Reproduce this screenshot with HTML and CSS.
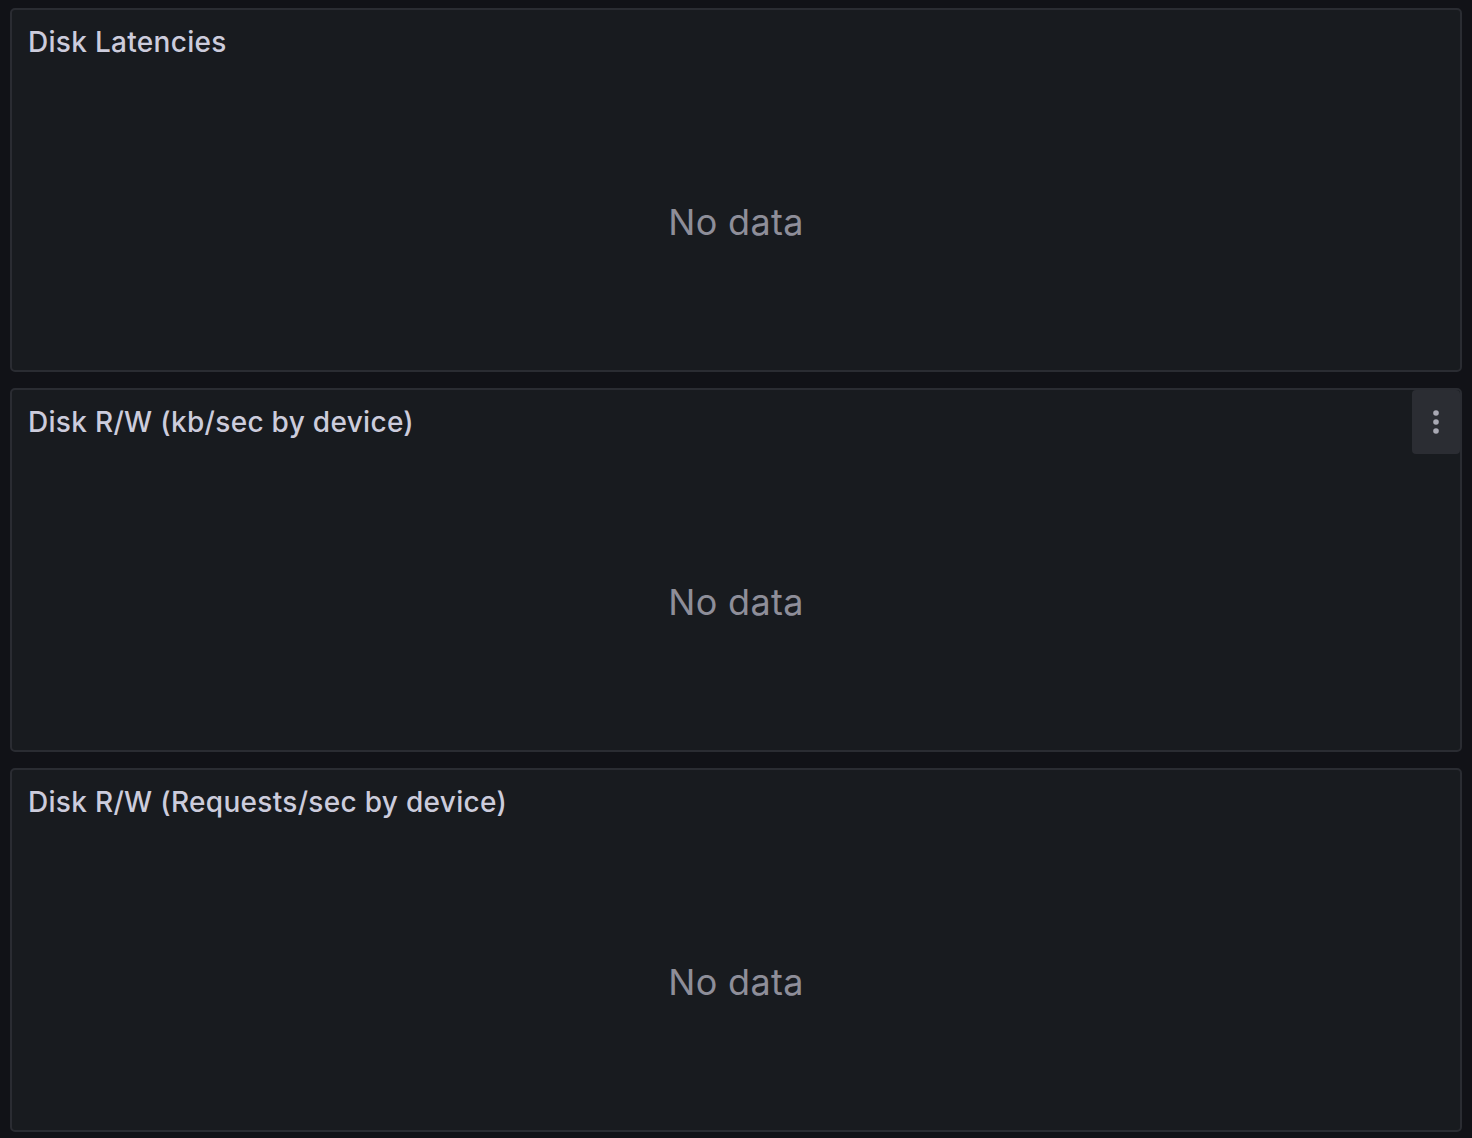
FILE: index.html
```html
<!DOCTYPE html>
<html>
<head>
<meta charset="utf-8">
<link rel="stylesheet" href="styles.css">
</head>
<body>
<div class="dashboard">
  <section class="panel">
    <header class="panel-header"><h2 class="panel-title">Disk Latencies</h2></header>
    <div class="panel-body"><span class="no-data">No data</span></div>
  </section>
  <section class="panel">
    <header class="panel-header"><h2 class="panel-title">Disk R/W (kb/sec by device)</h2>
      <button class="menu-btn" aria-label="Menu">
        <svg width="8" height="26" viewBox="0 0 8 26"><circle cx="4" cy="4" r="2.8" fill="#a9a9b4"/><circle cx="4" cy="13" r="2.8" fill="#a9a9b4"/><circle cx="4" cy="22" r="2.8" fill="#a9a9b4"/></svg>
      </button>
    </header>
    <div class="panel-body"><span class="no-data">No data</span></div>
  </section>
  <section class="panel">
    <header class="panel-header"><h2 class="panel-title">Disk R/W (Requests/sec by device)</h2></header>
    <div class="panel-body"><span class="no-data">No data</span></div>
  </section>
</div>
</body>
</html>
```
FILE: styles.css
```css
html, body {
  margin: 0;
  padding: 0;
  background: #111217;
}
body {
  font-family: Inter, "Noto Sans", sans-serif;
}
.dashboard {
  display: flex;
  flex-direction: column;
  gap: 16px;
  padding: 8px 10px;
}
.panel {
  position: relative;
  height: 364px;
  box-sizing: border-box;
  background: #181b1f;
  border: 2px solid #2a2c32;
  border-radius: 5px;
  display: flex;
  flex-direction: column;
}
.panel-header {
  height: 64px;
  flex: none;
  display: flex;
  align-items: center;
  padding: 0 16px;
}
.panel-title {
  margin: 0;
  font-size: 28px;
  font-weight: 500;
  color: #ccccdc;
  letter-spacing: 0.3px;
}
.menu-btn {
  position: absolute;
  top: 0;
  right: 0;
  width: 48px;
  height: 64px;
  border: none;
  padding: 0;
  background: #2b2d33;
  border-radius: 4px;
  display: flex;
  align-items: center;
  justify-content: center;
}
.panel-body {
  flex: 1;
  display: flex;
  align-items: center;
  justify-content: center;
}
.no-data {
  font-size: 36px;
  color: #8e8e99;
  letter-spacing: 0.3px;
}
```
